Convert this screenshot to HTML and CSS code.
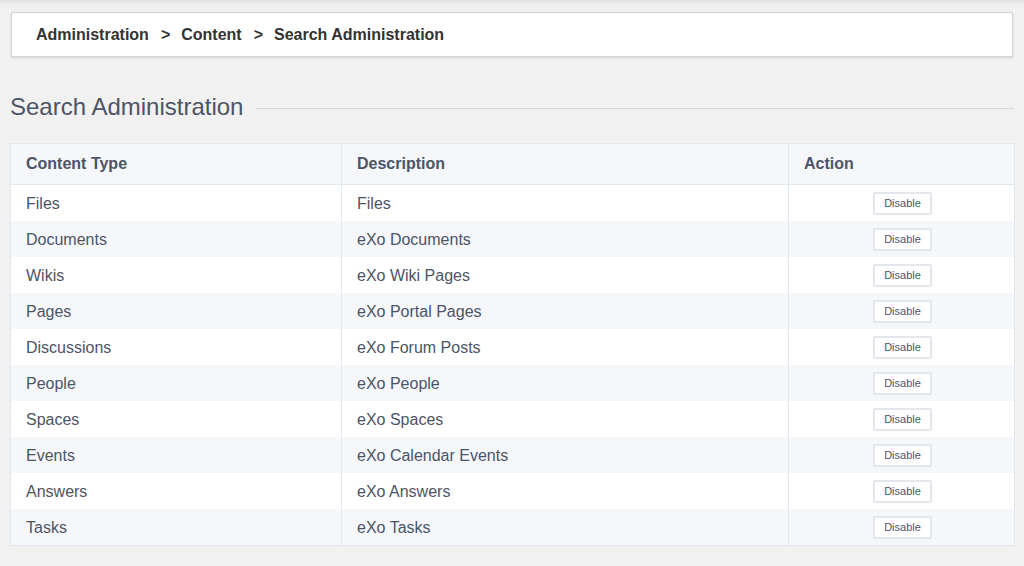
FILE: index.html
```html
<!DOCTYPE html>
<html>
<head>
<meta charset="utf-8">
<link rel="stylesheet" href="styles.css">
</head>
<body>
<div class="topshade"></div>
<div class="page">
  <div class="breadcrumb">
    <span>Administration</span><span class="sep">&gt;</span><span>Content</span><span class="sep">&gt;</span><span>Search Administration</span>
  </div>
  <div class="title-row">
    <h2 class="title">Search Administration</h2>
    <div class="title-line"></div>
  </div>
  <table class="grid">
    <colgroup><col class="c1"><col class="c2"><col class="c3"></colgroup>
    <thead>
      <tr><th>Content Type</th><th>Description</th><th>Action</th></tr>
    </thead>
    <tbody>
      <tr><td>Files</td><td>Files</td><td class="act"><button class="btn">Disable</button></td></tr>
      <tr><td>Documents</td><td>eXo Documents</td><td class="act"><button class="btn">Disable</button></td></tr>
      <tr><td>Wikis</td><td>eXo Wiki Pages</td><td class="act"><button class="btn">Disable</button></td></tr>
      <tr><td>Pages</td><td>eXo Portal Pages</td><td class="act"><button class="btn">Disable</button></td></tr>
      <tr><td>Discussions</td><td>eXo Forum Posts</td><td class="act"><button class="btn">Disable</button></td></tr>
      <tr><td>People</td><td>eXo People</td><td class="act"><button class="btn">Disable</button></td></tr>
      <tr><td>Spaces</td><td>eXo Spaces</td><td class="act"><button class="btn">Disable</button></td></tr>
      <tr><td>Events</td><td>eXo Calendar Events</td><td class="act"><button class="btn">Disable</button></td></tr>
      <tr><td>Answers</td><td>eXo Answers</td><td class="act"><button class="btn">Disable</button></td></tr>
      <tr><td>Tasks</td><td>eXo Tasks</td><td class="act"><button class="btn">Disable</button></td></tr>
    </tbody>
  </table>
</div>
</body>
</html>
```
FILE: styles.css
```css
html, body {
  margin: 0;
  padding: 0;
  background: #f1f1f1;
  font-family: "Liberation Sans", Arial, sans-serif;
  color: #4d5466;
}
.topshade {
  height: 6px;
  background: linear-gradient(#e2e2e2, #f1f1f1);
}
.page {
  padding: 6px 10px 0 10px;
}
.breadcrumb {
  margin: 0 1px 0 1px;
  height: 43px;
  background: #fff;
  border: 1px solid #d5d5d5;
  box-shadow: 0 1px 2px rgba(0,0,0,0.12);
  display: flex;
  align-items: center;
  padding-left: 24px;
  font-size: 16px;
  font-weight: bold;
  color: #333;
}
.sep {
  margin: 0 11px 0 12px;
}
.title-row {
  display: flex;
  align-items: center;
  margin-top: 35px;
  height: 30px;
}
.title {
  margin: 0;
  font-size: 24px;
  font-weight: normal;
  color: #4d5466;
  line-height: 30px;
}
.title-line {
  flex: 1;
  height: 1px;
  background: #d9d9d9;
  margin-left: 13px;
  margin-top: 3px;
}
.grid {
  margin-top: 21px;
  width: 1004px;
  border-collapse: collapse;
  border: 1px solid #e1e8ee;
  table-layout: fixed;
  font-size: 16px;
}
.c1 { width: 331px; }
.c2 { width: 447px; }
.c3 { width: 226px; }
.grid th {
  background: #f5f7fa;
  height: 40px;
  text-align: left;
  padding: 0 0 0 15px;
  font-weight: bold;
  color: #4d5466;
  border-left: 1px solid #e1e8ee;
  border-bottom: 1px solid #e1e8ee;
}
.grid td {
  height: 35px;
  padding: 1px 0 0 15px;
  border-left: 1px solid #e1e8ee;
  color: #4d5466;
}
.grid tbody tr:nth-child(odd) { background: #fff; }
.grid tbody tr:nth-child(even) { background: #f5f7fa; }
.grid td.act {
  padding: 0;
  text-align: center;
}
.btn {
  font-family: "Liberation Sans", Arial, sans-serif;
  font-size: 11px;
  color: #4d5466;
  background: #fff;
  border: 2px solid #e3e7ec;
  border-radius: 2px;
  width: 59px;
  height: 23px;
  padding: 0;
  margin-left: 2px;
  vertical-align: middle;
}
```
